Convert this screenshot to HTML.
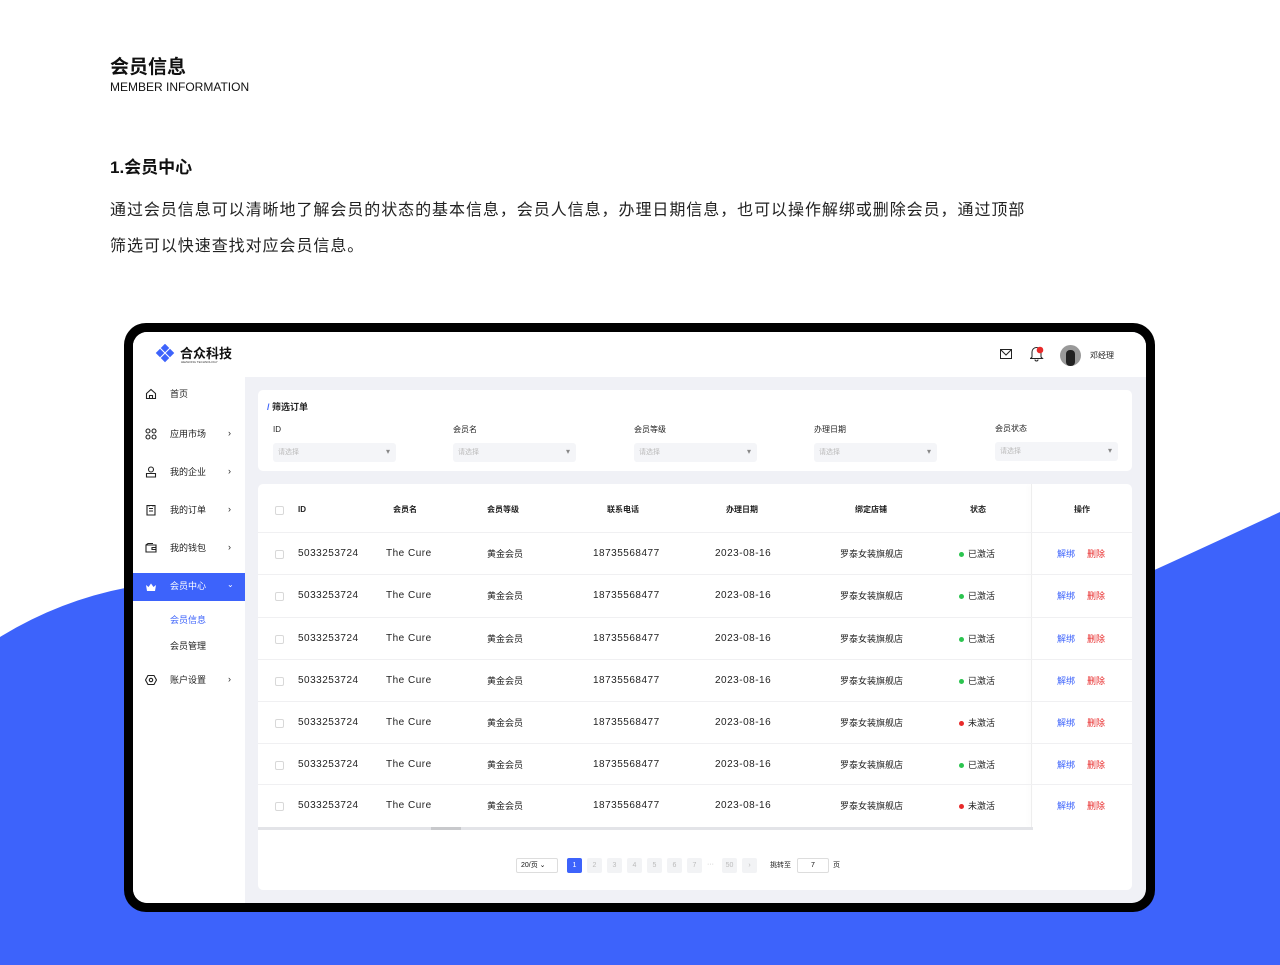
<!DOCTYPE html>
<html><head><meta charset="utf-8"><style>
*{margin:0;padding:0;box-sizing:border-box}
body{width:1280px;height:965px;background:#fff;position:relative;overflow:hidden;font-family:"Liberation Sans","Noto Sans CJK SC",sans-serif;color:#111}
.a{position:absolute}
.t{font-size:9px;color:#222;white-space:nowrap;line-height:12px}
.n{font-size:10px;letter-spacing:0.5px}
.sel{position:absolute;width:123px;height:19px;background:#f4f5f8;border-radius:3px;font-size:7px;color:#bbb;padding:5px 5px;line-height:9px}
.sel:after{content:"▾";position:absolute;right:6px;top:4px;color:#888;font-size:8px}
.cb{position:absolute;width:9px;height:9px;border:1px solid #d8d8d8;border-radius:2px;background:#fff}
.pg{position:absolute;width:15px;height:15px;background:#f2f3f5;border-radius:2px;font-size:7px;color:#bbb;text-align:center;line-height:15px}
svg.i{position:absolute;fill:none;stroke:#222;stroke-width:1.1}
</style></head><body>
<svg class="a" style="left:0;top:0" width="1280" height="965"><path d="M0,637 Q60,600 130,587 L1150,572 Q1220,540 1280,512 V965 H0 Z" fill="#3d63fb"/></svg>
<div class="a" style="left:110px;top:52px;font-size:19px;font-weight:bold">会员信息</div>
<div class="a" style="left:110px;top:80px;font-size:12px">MEMBER INFORMATION</div>
<div class="a" style="left:110px;top:153px;font-size:17px;font-weight:bold">1.会员中心</div>
<div class="a" style="left:110px;top:193px;font-size:16px;line-height:36px;color:#222;width:960px;letter-spacing:0.95px">通过会员信息可以清晰地了解会员的状态的基本信息，会员人信息，办理日期信息，也可以操作解绑或删除会员，通过顶部<br>筛选可以快速查找对应会员信息。</div>

<div class="a" style="left:124px;top:323px;width:1031px;height:589px;background:#000;border-radius:22px"></div>
<div class="a" style="left:133px;top:332px;width:1013px;height:571px;background:#f0f1f6;border-radius:14px;overflow:hidden">
 <div class="a" style="left:0;top:0;width:1013px;height:45px;background:#fff"></div>
 <div class="a" style="left:0;top:45px;width:112px;height:530px;background:#fff"></div>
 <svg class="a" style="left:22px;top:12px" width="22" height="22"><g fill="#3d63fb"><rect x="7" y="1" width="6" height="6" transform="rotate(45 10 4)"/><rect x="2" y="6" width="6" height="6" transform="rotate(45 5 9)"/><rect x="12" y="6" width="6" height="6" transform="rotate(45 15 9)"/><rect x="7" y="11" width="6" height="6" transform="rotate(45 10 14)"/></g></svg>
 <div class="a" style="left:47px;top:11px;font-size:13px;font-weight:bold">合众科技</div>
 <div class="a" style="left:48px;top:28px;font-size:3px;color:#333">HEZHONG TECHNOLOGY</div>
 <svg class="a" style="left:867px;top:17px" width="12" height="10"><rect x="0.5" y="0.5" width="11" height="9" fill="none" stroke="#222"/><path d="M1 1L6 6L11 1" fill="none" stroke="#222"/></svg>
 <svg class="a" style="left:897px;top:14px" width="14" height="16"><path d="M2 11V6a4.5 4.5 0 0 1 9 0v5l1.5 1.5H0.5Z M5 13.5a1.5 1.5 0 0 0 3 0" fill="none" stroke="#222"/><circle cx="10" cy="4" r="3.3" fill="#e82a2a"/></svg>
 <div class="a" style="left:927px;top:13px;width:21px;height:21px;border-radius:50%;background:#999;overflow:hidden"><div style="margin:5px 0 0 6px;width:9px;height:16px;background:#222;border-radius:4px"></div></div>
 <div class="a t" style="left:957px;top:18px;font-size:8px">邓经理</div>

 <svg class="i" style="left:12px;top:56px" width="12" height="12"><path d="M1.5 5.5L6 1.5L10.5 5.5V10.5H1.5Z M4.5 10.5V7.5H7.5V10.5"/></svg><div class="a t" style="left:37px;top:56px">首页</div>
 <svg class="i" style="left:12px;top:96px" width="12" height="12"><circle cx="3" cy="3" r="2"/><circle cx="9" cy="3" r="2"/><circle cx="3" cy="9" r="2"/><circle cx="9" cy="9" r="2"/></svg><div class="a t" style="left:37px;top:96px">应用市场</div><div class="a t" style="left:95px;top:95px">›</div>
 <svg class="i" style="left:12px;top:134px" width="12" height="12"><circle cx="6" cy="3.5" r="2.5"/><path d="M1.5 7.5H10.5V11H1.5Z"/></svg><div class="a t" style="left:37px;top:134px">我的企业</div><div class="a t" style="left:95px;top:133px">›</div>
 <svg class="i" style="left:12px;top:172px" width="12" height="12"><path d="M2 1.5H10V11H2Z M4 4.5H8 M4 7H8 M4 1V2.5 M8 1V2.5"/></svg><div class="a t" style="left:37px;top:172px">我的订单</div><div class="a t" style="left:95px;top:171px">›</div>
 <svg class="i" style="left:12px;top:210px" width="12" height="12"><path d="M1 3H11V10H1Z M1 3L3 1.5H8 M7 5.5H11V7.5H7Z"/></svg><div class="a t" style="left:37px;top:210px">我的钱包</div><div class="a t" style="left:95px;top:209px">›</div>
 <div class="a" style="left:0;top:241px;width:112px;height:28px;background:#3d63fb"></div>
 <svg class="a" style="left:12px;top:249px" width="12" height="12"><path d="M1 4L3.5 6L6 2.5L8.5 6L11 4L10 10H2Z" fill="#fff"/></svg><div class="a t" style="left:37px;top:248px;color:#fff">会员中心</div><div class="a t" style="left:94px;top:247px;color:#fff;font-size:8px">⌄</div>
 <div class="a t" style="left:37px;top:282px;color:#3d63fb">会员信息</div>
 <div class="a t" style="left:37px;top:308px">会员管理</div>
 <svg class="i" style="left:12px;top:342px" width="12" height="12"><path d="M3 1.5H9L11.5 6L9 10.5H3L0.5 6Z"/><circle cx="6" cy="6" r="1.7"/></svg><div class="a t" style="left:37px;top:342px">账户设置</div><div class="a t" style="left:95px;top:341px">›</div>

 <div class="a" style="left:125px;top:58px;width:874px;height:81px;background:#fff;border-radius:5px"></div>
 <div class="a t" style="left:134px;top:69px;font-weight:bold"><span style="color:#3d63fb">/</span> 筛选订单</div>
 <div class="a t" style="left:140px;top:92px;font-size:8px">ID</div>
 <div class="a t" style="left:320px;top:92px;font-size:8px">会员名</div>
 <div class="a t" style="left:501px;top:92px;font-size:8px">会员等级</div>
 <div class="a t" style="left:681px;top:92px;font-size:8px">办理日期</div>
 <div class="a t" style="left:862px;top:91px;font-size:8px">会员状态</div>
 <div class="sel" style="left:140px;top:111px">请选择</div>
 <div class="sel" style="left:320px;top:111px">请选择</div>
 <div class="sel" style="left:501px;top:111px">请选择</div>
 <div class="sel" style="left:681px;top:111px">请选择</div>
 <div class="sel" style="left:862px;top:110px">请选择</div>

 <div class="a" style="left:125px;top:152px;width:874px;height:406px;background:#fff;border-radius:5px"></div>
 <div class="a" style="left:898px;top:152px;width:1px;height:343px;background:#eee;box-shadow:-2px 0 4px rgba(0,0,0,.05)"></div>
 <div id="tb"></div>
 <div class="a" style="left:125px;top:495px;width:775px;height:3px;background:#e3e4e8"></div>
 <div class="a" style="left:298px;top:495px;width:30px;height:3px;background:#c8c9cc"></div>
 <div class="a" style="left:383px;top:526px;width:42px;height:15px;border:1px solid #ddd;border-radius:2px;font-size:7px;padding:0 4px;line-height:13px">20/页 ⌄</div>
 <div class="pg" style="left:434px;top:526px;background:#3d63fb;color:#fff">1</div>
 <div class="pg" style="left:454px;top:526px">2</div><div class="pg" style="left:474px;top:526px">3</div><div class="pg" style="left:494px;top:526px">4</div><div class="pg" style="left:514px;top:526px">5</div><div class="pg" style="left:534px;top:526px">6</div><div class="pg" style="left:554px;top:526px">7</div>
 <div class="a" style="left:574px;top:529px;font-size:7px;color:#bbb">···</div>
 <div class="pg" style="left:589px;top:526px">50</div><div class="pg" style="left:609px;top:526px">›</div>
 <div class="a t" style="left:637px;top:528px;font-size:7px">挑转至</div>
 <div class="a" style="left:664px;top:526px;width:32px;height:15px;border:1px solid #ddd;border-radius:2px;font-size:7px;text-align:center;line-height:13px">7</div>
 <div class="a t" style="left:700px;top:528px;font-size:7px">页</div>
</div>
<script>
var h='',y0=510-332;
var hd=[[165,'ID'],[260,'会员名'],[354,'会员等级'],[474,'联系电话'],[593,'办理日期'],[722,'绑定店铺'],[837,'状态'],[941,'操作']];
h+='<div class="cb" style="left:142px;top:'+(y0-4)+'px"></div>';
hd.forEach(function(c){h+='<div class="a t" style="left:'+c[0]+'px;top:'+(y0-6)+'px;font-weight:bold;font-size:8px">'+c[1]+'</div>'});
var ys=[554,596,639,681,723,765,806],st=[1,1,1,1,0,1,0];
ys.forEach(function(y,i){y-=332;
h+='<div class="a" style="left:125px;top:'+(y-22)+'px;width:874px;height:1px;background:#f0f0f2"></div>';
h+='<div class="cb" style="left:142px;top:'+(y-4)+'px"></div>';
var c=[[165,'5033253724',1],[253,'The Cure',1],[354,'黄金会员',0],[460,'18735568477',1],[582,'2023-08-16',1],[707,'罗泰女装旗舰店',0]];
c.forEach(function(v){h+='<div class="a t'+(v[2]?' n':'')+'" style="left:'+v[0]+'px;top:'+(y-6)+'px">'+v[1]+'</div>'});
h+='<div class="a" style="left:826px;top:'+(y-2)+'px;width:5px;height:5px;border-radius:50%;background:'+(st[i]?'#2bc44f':'#e82a2a')+'"></div>';
h+='<div class="a t" style="left:835px;top:'+(y-6)+'px">'+(st[i]?'已激活':'未激活')+'</div>';
h+='<div class="a t" style="left:924px;top:'+(y-6)+'px;color:#3d63fb">解绑</div><div class="a t" style="left:954px;top:'+(y-6)+'px;color:#e82a2a">删除</div>';
});
document.getElementById('tb').outerHTML=h;
</script>
</body></html>
